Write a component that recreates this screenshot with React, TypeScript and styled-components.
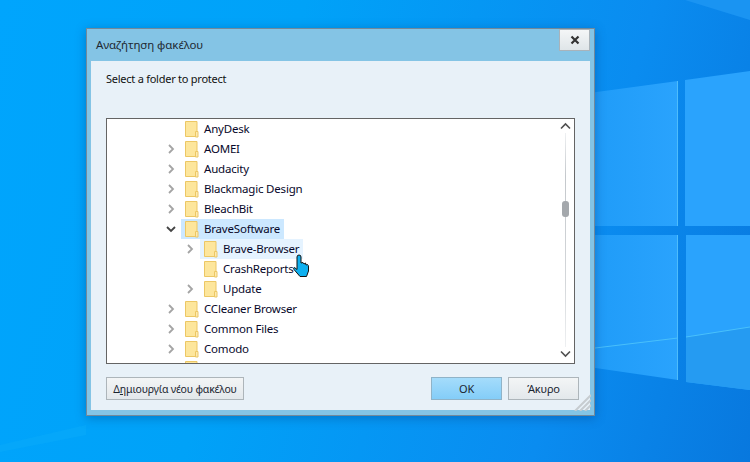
import React from "react";
import styled, { createGlobalStyle } from "styled-components";

const Global = createGlobalStyle`
  html, body { margin: 0; padding: 0; width: 750px; height: 462px; overflow: hidden; }
  * { box-sizing: border-box; }
`;

const Desktop = styled.div`
  position: relative;
  width: 750px;
  height: 462px;
  overflow: hidden;
  padding: 28px 0 0 86px;
  background: linear-gradient(105deg, #00a5fd 0%, #00a2f8 35%, #0a8cf0 75%, #0878de 100%);
  font-family: "Noto Sans", "Open Sans", sans-serif;
`;

const Wallpaper = styled.svg`
  position: absolute;
  inset: 0;
`;

const Dialog = styled.div`
  position: relative;
  width: 509px;
  height: 388px;
  display: flex;
  flex-direction: column;
  background: #84c4e5;
  border: 1px solid #73899a;
  box-shadow: 0 2px 10px rgba(0, 50, 110, 0.35);
`;

const TitleBar = styled.div`
  height: 32px;
  flex: none;
  display: flex;
  justify-content: space-between;
  align-items: flex-start;
  padding: 0 4px 0 9px;
`;

const Title = styled.span`
  font-size: 11.5px;
  line-height: 32px;
  letter-spacing: -0.1px;
  color: #1f2a33;
`;

const CloseButton = styled.div`
  width: 31px;
  height: 22px;
  display: flex;
  align-items: center;
  justify-content: center;
  background: linear-gradient(#f4f6f7, #dfe5e8);
  border: 1px solid #a9b3ba;
`;

const Client = styled.div`
  flex: 1;
  margin: 0 4px 5px 4px;
  background: #e8f1f8;
  display: flex;
  flex-direction: column;
  padding: 10px 11px 10px 15px;
`;

const Prompt = styled.div`
  font-size: 11px;
  line-height: 16px;
  letter-spacing: -0.25px;
  color: #111;
  height: 47px;
`;

const TreeBox = styled.div`
  position: relative;
  width: 469px;
  height: 246px;
  flex: none;
  background: #fff;
  border: 1px solid #646464;
  overflow: hidden;
  display: flex;
`;

const Tree = styled.div`
  flex: 1;
  display: flex;
  flex-direction: column;
`;

const Row = styled.div<{ $level: number }>`
  height: 20px;
  flex: none;
  display: flex;
  align-items: center;
  padding-left: ${(p) => 53 + p.$level * 19}px;
`;

const Chevron = styled.span`
  width: 21px;
  height: 20px;
  flex: none;
  display: flex;
  align-items: center;
  justify-content: center;
`;

const Item = styled.div<{ $state?: "selected" | "hover" }>`
  height: 20px;
  display: flex;
  align-items: center;
  gap: 5px;
  padding: 0 4px;
  background: ${(p) => (p.$state === "selected" ? "#cce8ff" : p.$state === "hover" ? "#e5f3ff" : "transparent")};
`;

const Label = styled.span`
  font-size: 11.5px;
  line-height: 18px;
  letter-spacing: -0.2px;
  color: #08082a;
  white-space: nowrap;
`;

const ScrollBar = styled.div`
  width: 17px;
  flex: none;
  display: flex;
  flex-direction: column;
  align-items: center;
  padding: 3px 0 5px;
`;

const Track = styled.div`
  position: relative;
  flex: 1;
  width: 1px;
  margin: 3px 0;
  background: linear-gradient(#eef0f2, #c4c8cc 20%, #d4d7da 70%, #eef0f2);
`;

const Thumb = styled.div`
  position: absolute;
  left: -3px;
  top: 68px;
  width: 7px;
  height: 16px;
  border-radius: 3px;
  background: #a4a8ac;
`;

const Footer = styled.div`
  flex: 1;
  display: flex;
  align-items: flex-start;
  justify-content: space-between;
  padding: 13px 0 0 0;
`;

const Actions = styled.div`
  display: flex;
  gap: 6px;
`;

const Button = styled.div<{ $primary?: boolean; $width: number }>`
  width: ${(p) => p.$width}px;
  height: 23px;
  display: flex;
  align-items: center;
  justify-content: center;
  font-size: 11px;
  letter-spacing: -0.15px;
  white-space: nowrap;
  color: #1a2530;
  border: 1px solid ${(p) => (p.$primary ? "#8fb3c8" : "#adb5ba")};
  background: ${(p) =>
    p.$primary ? "linear-gradient(#a4dcfb, #84cdf8)" : "linear-gradient(#f3f5f6, #e3e8eb)"};
`;

const CreateLabel = styled.span`
  font-size: 10.5px;
  letter-spacing: -0.2px;
`;

const Grip = styled.svg`
  position: absolute;
  right: 3px;
  bottom: 4px;
`;

const Cursor = styled.svg`
  position: absolute;
  left: 205px;
  top: 225px;
`;

const Folder = () => (
  <svg width="14" height="17" viewBox="0 0 14 17">
    <path d="M.5.5h11.5v15H.5z" fill="#fde69c" stroke="#ecc764" />
    <path d="M10.5 10.5h2.5v5.5h-2.5z" fill="#fdeab0" stroke="#ecc764" />
  </svg>
);

const ChevronIcon = ({ open }: { open?: boolean }) => (
  <svg width="10" height="10" viewBox="0 0 10 10">
    {open ? (
      <path d="M1 3l4 4 4-4" fill="none" stroke="#444" strokeWidth="1.8" />
    ) : (
      <path d="M3 1l4 4-4 4" fill="none" stroke="#a4a4a4" strokeWidth="1.8" />
    )}
  </svg>
);

type Node = {
  name: string;
  level: number;
  chevron?: "open" | "closed";
  state?: "selected" | "hover";
};

const nodes: Node[] = [
  { name: "AnyDesk", level: 0 },
  { name: "AOMEI", level: 0, chevron: "closed" },
  { name: "Audacity", level: 0, chevron: "closed" },
  { name: "Blackmagic Design", level: 0, chevron: "closed" },
  { name: "BleachBit", level: 0, chevron: "closed" },
  { name: "BraveSoftware", level: 0, chevron: "open", state: "selected" },
  { name: "Brave-Browser", level: 1, chevron: "closed", state: "hover" },
  { name: "CrashReports", level: 1 },
  { name: "Update", level: 1, chevron: "closed" },
  { name: "CCleaner Browser", level: 0, chevron: "closed" },
  { name: "Common Files", level: 0, chevron: "closed" },
  { name: "Comodo", level: 0, chevron: "closed" },
  { name: "", level: 0 },
];

export default function App() {
  return (
    <Desktop>
      <Global />
      <Wallpaper width="750" height="462" viewBox="0 0 750 462">
        <defs>
          <linearGradient id="pane" x1="0" y1="0" x2="1" y2="0">
            <stop offset="0" stopColor="#1394f3" />
            <stop offset="1" stopColor="#2aa3fd" />
          </linearGradient>
        </defs>
        <path d="M685 0L750 20V0z" fill="#1a94f2" />
        <path d="M0 445L86 425V435L0 452z" fill="#0fb0fa" opacity="0.35" />
        <path d="M500 105L678 81V226H500z" fill="url(#pane)" />
        <path d="M685 80L750 71V226H685z" fill="#2aa3fd" />
        <path d="M500 235H678V380L500 354z" fill="url(#pane)" />
        <path d="M686 235H750V390L686 382z" fill="#2aa3fd" />
        <path d="M686 337L750 327V390L686 382z" fill="#259bf2" />
        <path d="M595 348L678 338M686 337L750 327" stroke="#49c0fb" strokeWidth="1" />
        <path d="M677.500 81V226M677.500 235V380" stroke="#4fbdfb" strokeWidth="1" />
      </Wallpaper>
      <Dialog>
        <TitleBar>
          <Title>Αναζήτηση φακέλου</Title>
          <CloseButton>
            <svg width="10" height="10" viewBox="0 0 10 10">
              <path d="M1.500 1.500l7 7M8.500 1.500l-7 7" stroke="#333" strokeWidth="2.2" />
            </svg>
          </CloseButton>
        </TitleBar>
        <Client>
          <Prompt>Select a folder to protect</Prompt>
          <TreeBox>
            <Tree>
              {nodes.map((n, i) => (
                <Row key={i} $level={n.level}>
                  <Chevron>{n.chevron && <ChevronIcon open={n.chevron === "open"} />}</Chevron>
                  <Item $state={n.state}>
                    <Folder />
                    {n.name && <Label>{n.name}</Label>}
                  </Item>
                </Row>
              ))}
            </Tree>
            <ScrollBar>
              <svg width="11" height="8" viewBox="0 0 11 8">
                <path d="M1 6.500l4.500-4.500 4.500 4.500" fill="none" stroke="#505050" strokeWidth="1.6" />
              </svg>
              <Track>
                <Thumb />
              </Track>
              <svg width="11" height="8" viewBox="0 0 11 8">
                <path d="M1 1.500l4.500 4.500 4.500-4.500" fill="none" stroke="#505050" strokeWidth="1.6" />
              </svg>
            </ScrollBar>
          </TreeBox>
          <Footer>
            <Button $width={138}>
              <CreateLabel>Δ<u>η</u>μιουργία νέου φακέλου</CreateLabel>
            </Button>
            <Actions>
              <Button $primary $width={71}>OK</Button>
              <Button $width={71}>Άκυρο</Button>
            </Actions>
          </Footer>
        </Client>
        <Grip width="17" height="17" viewBox="0 0 17 17">
          <path d="M1 17L17 1M6 17L17 6M11 17L17 11" stroke="#c6ccd0" strokeWidth="2" />
        </Grip>
        <Cursor width="18" height="24" viewBox="0 0 18 24">
          <path
            d="M5 3Q5 1 7 1Q9 1 9 3V9L11 8.500L12 10L13.500 9L14 11L15.500 10.500Q16.500 11 16.500 13V17L14.500 22.500H8L2 15.500Q1 13.500 2.500 13.500L5 15.500Z"
            fill="#0eb0f0"
            stroke="#111"
            strokeWidth="1"
          />
        </Cursor>
      </Dialog>
    </Desktop>
  );
}
